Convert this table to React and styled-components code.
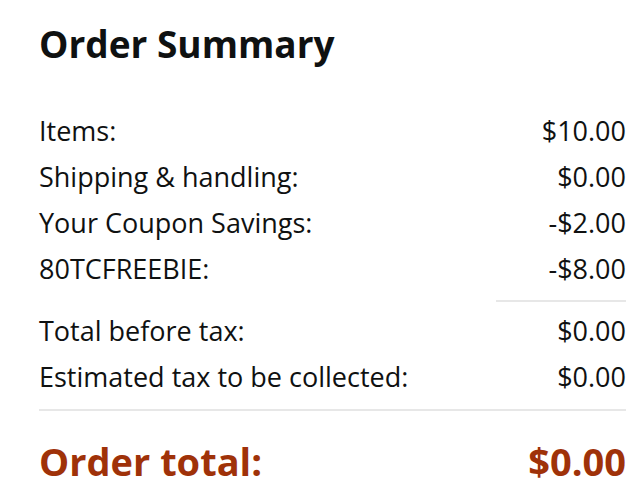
import React from 'react'
import styled, { createGlobalStyle } from 'styled-components'

const GlobalStyle = createGlobalStyle`
  body {
    margin: 0;
    background: #ffffff;
    font-family: 'Open Sans', 'Noto Sans', Arial, sans-serif;
    color: #0f1111;
  }
`

const rows = [
  { label: 'Items:', value: '$10.00' },
  { label: 'Shipping & handling:', value: '$0.00' },
  { label: 'Your Coupon Savings:', value: '-$2.00' },
  { label: '80TCFREEBIE:', value: '-$8.00' },
]

const taxRows = [
  { label: 'Total before tax:', value: '$0.00' },
  { label: 'Estimated tax to be collected:', value: '$0.00' },
]

export default function App() {
  return (
    <>
      <GlobalStyle />
      <Summary>
        <Title>Order Summary</Title>
        <Group>
          {rows.map((r) => (
            <Row key={r.label}>
              <span>{r.label}</span>
              <span>{r.value}</span>
            </Row>
          ))}
        </Group>
        <ShortRule />
        <Group>
          {taxRows.map((r) => (
            <Row key={r.label}>
              <span>{r.label}</span>
              <span>{r.value}</span>
            </Row>
          ))}
        </Group>
        <FullRule />
        <TotalRow>
          <span>Order total:</span>
          <span>$0.00</span>
        </TotalRow>
      </Summary>
    </>
  )
}

const Summary = styled.div`
  width: 587px;
  padding: 22px 0 0 39px;
  display: flex;
  flex-direction: column;
`

const Title = styled.h1`
  margin: 0 0 42px 0;
  font-size: 37px;
  line-height: 44px;
  font-weight: 700;
  color: #0f1111;
`

const Group = styled.div`
  display: flex;
  flex-direction: column;
`

const Row = styled.div`
  display: flex;
  justify-content: space-between;
  font-size: 27px;
  line-height: 46px;
`

const ShortRule = styled.div`
  align-self: flex-end;
  width: 130px;
  height: 2px;
  background: #e7e7e7;
  margin: 8px 0 6px 0;
`

const FullRule = styled.div`
  height: 2px;
  background: #e7e7e7;
  margin: 9px 0 25px 0;
`

const TotalRow = styled.div`
  display: flex;
  justify-content: space-between;
  font-size: 38px;
  line-height: 50px;
  font-weight: 700;
  color: #9f3209;
`
